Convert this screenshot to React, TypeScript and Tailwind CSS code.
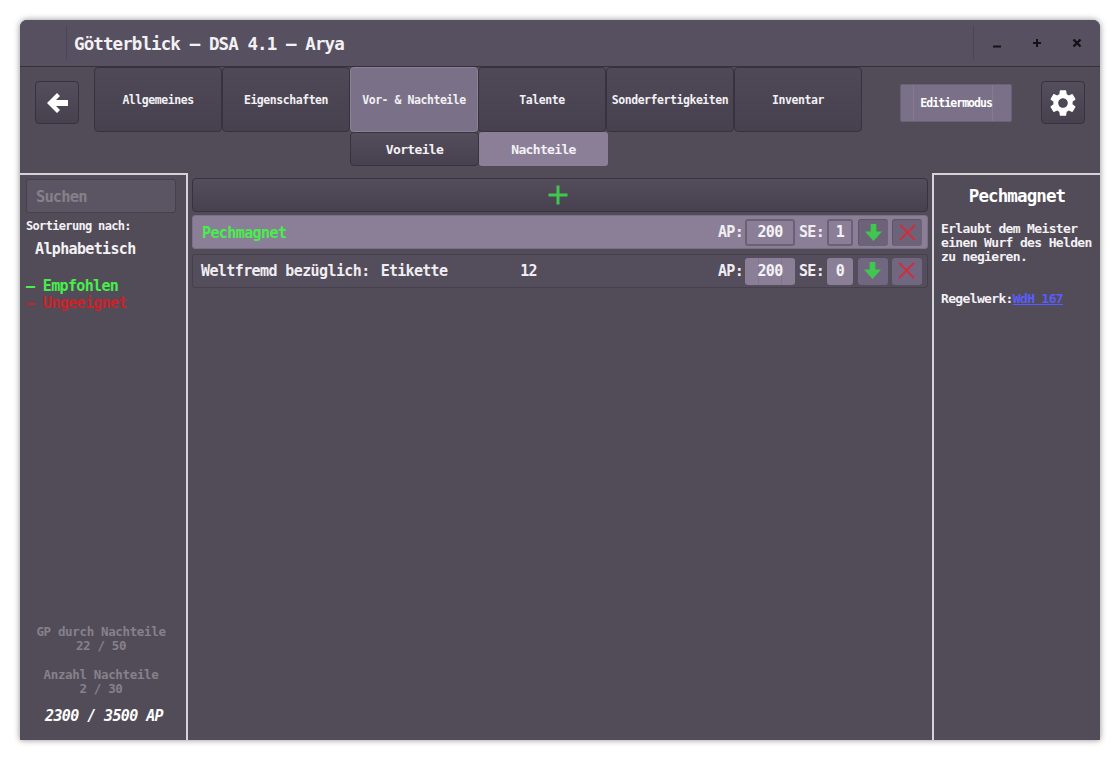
import React from 'react';
import { MdSettings } from 'react-icons/md';

const mono = "font-['DejaVu_Sans_Mono','Liberation_Mono',monospace]";
const darkBtn = 'bg-gradient-to-b from-[#544d5c] to-[#47414f] border border-[#37323d] rounded-[4px]';
const tabs = ['Allgemeines', 'Eigenschaften', 'Vor- & Nachteile', 'Talente', 'Sonderfertigkeiten', 'Inventar'];

const ArrowDown = () => (
  <svg className="mb-[1px] mr-[1px]" width="17" height="17" viewBox="0 0 18 18">
    <path d="M6 0h6v8h6l-9 10-9-10h6z" fill="#3fc74f" />
  </svg>
);

const Cross = () => (
  <svg className="mb-[1px] mr-[1px]" width="17" height="17" viewBox="0 0 18 18">
    <path d="M1 1l16 16M17 1L1 17" stroke="#d9283a" strokeWidth="2" fill="none" />
  </svg>
);

const Row = ({ active, se, top, children }: { active?: boolean; se: string; top: string; children: React.ReactNode }) => {
  const field = `flex items-center justify-center rounded-[3px] text-[15px] font-bold tracking-[-0.7px] text-[#f5f3f6] bg-[#8b7f98] h-[27px] ${active ? 'border-2 border-[#6a6176]' : ''}`;
  const action = `w-[30px] h-[27px] flex items-center justify-center rounded-[3px] ${active ? 'bg-[#6d6379] border-l border-t border-[#5e5569]' : 'bg-[#716780]'}`;
  return (
    <div className={`${top} h-[34px] rounded-[3px] border flex items-center pl-[8px] pr-[5px] ${active ? 'bg-[#8b7f98] border-[#7a7087]' : 'bg-[#544d5c] border-[#45404c]'}`}>
      {children}
      <span className="ml-auto text-[15px] font-bold tracking-[-0.7px] text-[#f0edf2]">AP:</span>
      <div className={`ml-[2px] w-[50px] ${field}`}>
        <div className={`w-[24px] h-full flex items-center justify-center whitespace-nowrap ${active ? '' : 'border-x border-[#7f748c]'}`}>200</div>
      </div>
      <span className="ml-[4px] text-[15px] font-bold tracking-[-0.7px] text-[#f0edf2]">SE:</span>
      <div className={`ml-[3px] w-[26px] ${field}`}>{se}</div>
      <div className={`ml-[5px] ${action}`}><ArrowDown /></div>
      <div className={`ml-[4px] ${action}`}><Cross /></div>
    </div>
  );
};

export default function App() {
  return (
    <div className="w-[1120px] h-[760px] bg-white p-[20px]">
      <div className={`${mono} w-[1080px] h-[720px] flex flex-col bg-[#524c58] rounded-t-[7px] shadow-[0_0_6px_rgba(0,0,0,0.45)] overflow-hidden`}>
        <div className="h-[47px] shrink-0 flex items-center bg-[#565060] border-b border-[#35313a]">
          <div className="w-[47px] h-[34px] border-r border-[#4c4654]" />
          <div className="ml-[7px] mt-[3px] text-[17.5px] leading-none font-bold text-[#f3f1f4] tracking-[-0.9px]">Götterblick – DSA 4.1 – Arya</div>
          <div className="ml-auto h-[34px] w-[127px] pl-[3px] border-l border-[#4c4654] flex items-center">
            <div className="w-[40px] flex justify-center">
              <svg width="10" height="10" viewBox="0 0 10 10"><path d="M1 8.5h8" stroke="#141216" strokeWidth="2" fill="none" /></svg>
            </div>
            <div className="w-[40px] flex justify-center">
              <svg width="10" height="10" viewBox="0 0 10 10"><path d="M1 5h8M5 1v8" stroke="#141216" strokeWidth="2" fill="none" /></svg>
            </div>
            <div className="w-[40px] flex justify-center">
              <svg width="10" height="10" viewBox="0 0 10 10"><path d="M1.5 1.5l7 7M8.5 1.5l-7 7" stroke="#141216" strokeWidth="2.4" fill="none" /></svg>
            </div>
          </div>
        </div>

        <div className="h-[106px] shrink-0 flex bg-[#524c58]">
          <div className={`${darkBtn} ml-[15px] mt-[14px] w-[44px] h-[43px] flex items-center justify-center`}>
            <svg width="21" height="20" viewBox="0 0 21 20"><path d="M10 0L0 10l10 10 3-3-4-4h12V7H9l4-4z" fill="#fff" /></svg>
          </div>
          <div className="ml-[15px] flex flex-col">
            <div className="flex">
              {tabs.map((t) => (
                <div key={t} className={`w-[128px] h-[65px] pt-[2px] flex items-center justify-center rounded-[4px] border text-[11.5px] font-bold tracking-[-0.45px] text-[#f3f1f4] ${t === 'Vor- & Nachteile' ? 'bg-[#7a7087] border-[#8b8296]' : 'bg-gradient-to-b from-[#4f4957] to-[#47414f] border-[#37323d]'}`}>{t}</div>
              ))}
            </div>
            <div className="flex ml-[256px]">
              <div className={`${darkBtn} w-[129px] h-[34px] pt-[2px] flex items-center justify-center text-[13px] font-bold tracking-[-0.65px] text-[#f3f1f4]`}>Vorteile</div>
              <div className="w-[129px] h-[34px] pt-[2px] rounded-[3px] bg-[#8b7f98] flex items-center justify-center text-[13px] font-bold tracking-[-0.65px] text-[#f3f1f4]">Nachteile</div>
            </div>
          </div>
          <div className="ml-[38px] mt-[17px] w-[112px] h-[38px] rounded-[2px] bg-[#7a7087] border border-[#6b6278] flex text-[11.5px] font-bold tracking-[-0.95px] text-white">
            <div className="w-[13px]" />
            <div className="flex-1 pt-[2px] pl-[6px] flex items-center justify-center border-x border-[#857b92] whitespace-nowrap">Editiermodus</div>
            <div className="w-[19px]" />
          </div>
          <div className={`${darkBtn} ml-[29px] mt-[14px] w-[44px] h-[43px] flex items-center justify-center`}><MdSettings size={32} color="#fff" /></div>
        </div>

        <div className="flex-1 flex min-h-0">
          <div className="w-[168px] shrink-0 border-t-2 border-r-2 border-[#d5d2d8] flex flex-col text-[#f3f1f4]">
            <div className="ml-[6px] mr-[10px] mt-[4px] h-[34px] pt-[3px] rounded-[3px] border border-[#45404c] bg-[#5b5563] flex items-center pl-[9px] text-[15.5px] font-bold tracking-[-0.9px] text-[#858089]">Suchen</div>
            <div className="ml-[6px] mt-[4px] text-[12px] font-bold tracking-[-0.67px]">Sortierung nach:</div>
            <div className="ml-[15px] mt-[3px] text-[15px] font-bold tracking-[-0.65px]">Alphabetisch</div>
            <div className="ml-[6px] mt-[17px] text-[15px] leading-[17px] font-bold tracking-[-0.65px]">
              <div className="text-[#47ee4c]">– Empfohlen</div>
              <div className="text-[#c8232a]">– Ungeeignet</div>
            </div>
            <div className="mt-auto pr-[4px] text-center text-[#86818b] font-bold text-[12.5px] leading-[14px] tracking-[-0.35px]">
              <div>GP durch Nachteile</div>
              <div>22 / 50</div>
              <div className="mt-[15px]">Anzahl Nachteile</div>
              <div>2 / 30</div>
            </div>
            <div className="mt-[11px] mb-[15px] pl-[2px] text-center text-[15px] leading-[18px] font-bold italic tracking-[-0.6px] text-white">2300 / 3500 AP</div>
          </div>

          <div className="flex-1 px-[4px] pt-[5px] flex flex-col">
            <div className={`${darkBtn} h-[34px] flex items-center justify-center`}>
              <svg className="mr-[4px]" width="20" height="20" viewBox="0 0 20 20"><path d="M0.5 10h19M10 0.5v19" stroke="#3fc74f" strokeWidth="3" fill="none" /></svg>
            </div>
            <Row active se="1" top="mt-[3px]">
              <span className="ml-[1px] pt-[2px] text-[15px] font-bold tracking-[-0.6px] text-[#47ee4c]">Pechmagnet</span>
            </Row>
            <Row se="0" top="mt-[5px]">
              <span className="text-[15px] font-bold tracking-[-0.6px] text-[#f0edf2]">Weltfremd bezüglich:</span>
              <span className="ml-[11px] text-[15px] font-bold tracking-[-0.7px] text-[#f0edf2]">Etikette</span>
              <span className="ml-[73px] text-[15px] font-bold tracking-[-0.7px] text-[#f0edf2]">12</span>
            </Row>
          </div>

          <div className="w-[168px] shrink-0 border-t-2 border-l-2 border-[#d5d2d8] text-[#f3f1f4] px-[7px]">
            <div className="mt-[8px] text-center text-[17.5px] font-bold tracking-[-0.9px] text-white">Pechmagnet</div>
            <div className="mt-[13px] text-[13px] leading-[14px] font-bold tracking-[-0.65px]">Erlaubt dem Meister einen Wurf des Helden zu negieren.</div>
            <div className="mt-[25px] text-[13px] font-bold tracking-[-0.65px]">
              Regelwerk:<a className="underline text-[#5a5cff]" href="#">WdH 167</a>
            </div>
          </div>
        </div>
      </div>
    </div>
  );
}
